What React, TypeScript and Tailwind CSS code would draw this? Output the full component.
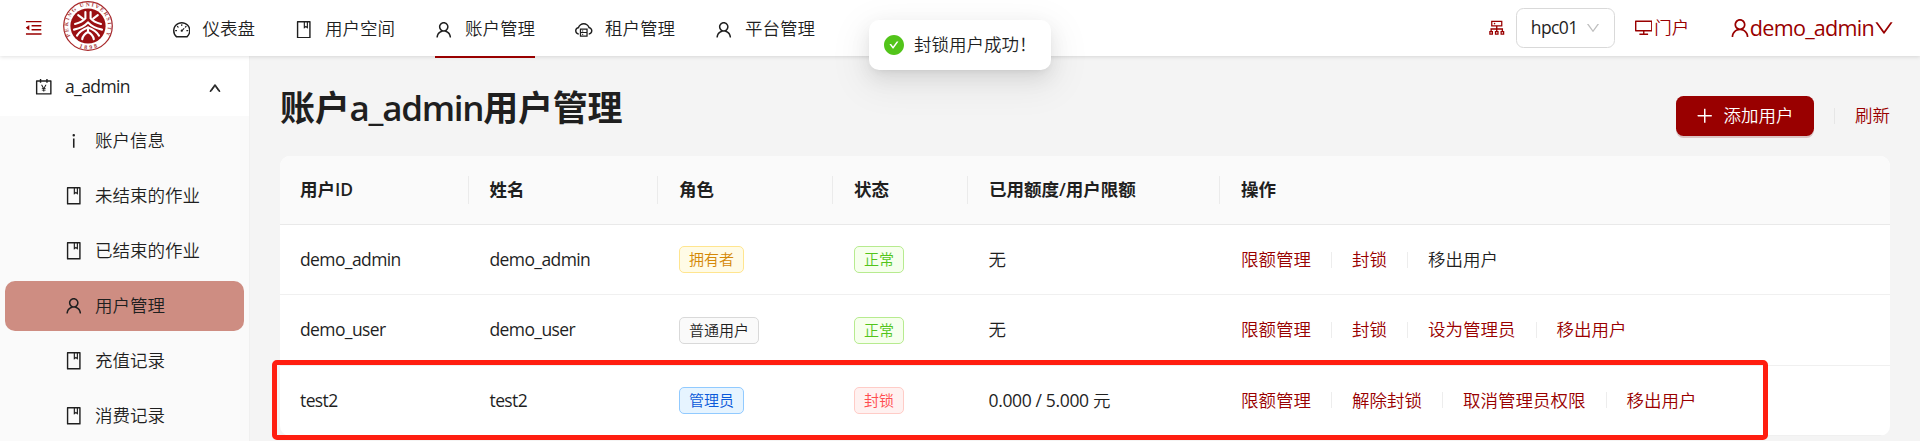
import type { ReactNode } from "react";
import type { IconType } from "react-icons";
import {
  AiFillCheckCircle,
  AiOutlineAccountBook,
  AiOutlineBook,
  AiOutlineCloudServer,
  AiOutlineCluster,
  AiOutlineDashboard,
  AiOutlineDesktop,
  AiOutlineDown,
  AiOutlineInfo,
  AiOutlineMenuFold,
  AiOutlinePlus,
  AiOutlineUp,
  AiOutlineUser,
} from "react-icons/ai";

function Icon({ as: As, className = "size-[17.5px]" }: { as: IconType; className?: string }) {
  return <As viewBox="64 64 896 896" className={"shrink-0 " + className} />;
}

function Logo() {
  return (
    <svg viewBox="0 0 50 50" className="size-[50px] shrink-0">
      <defs>
        <path id="ringTop" d="M7.6 35A20 20 0 1 1 42.4 35" />
        <path id="ringBottom" d="M12 44.2A23.2 23.2 0 0 0 38 44.2" />
      </defs>
      <circle cx="25" cy="25" r="24.3" fill="#fff" stroke="#a8292b" strokeWidth="1.2" />
      <circle cx="25" cy="25" r="17.6" fill="#9b1013" />
      <text fontSize="5.6" fontWeight="700" fill="#a83a3b" fontFamily="Liberation Serif, serif">
        <textPath href="#ringTop" textLength="82">PEKING UNIVERSITY</textPath>
      </text>
      <text fontSize="6" fontWeight="700" fill="#a83a3b" fontFamily="Liberation Serif, serif">
        <textPath href="#ringBottom" startOffset="4.5" textLength="19">1898</textPath>
      </text>
      <g fill="none" stroke="#fff" strokeWidth="2.1" strokeLinecap="round" strokeLinejoin="round">
        <path d="M22.4 11V17.4Q19.5 21 12 23" />
        <path d="M27.6 11V17.4Q30.5 21 38 23" />
        <path d="M15.2 14.2L19.8 17.6M34.8 14.2L30.2 17.6" />
        <path d="M11 28.6Q20.5 26.6 25 21.4Q29.5 26.6 39 28.6" />
        <path d="M14 34.6Q17 29.6 25 26.6Q33 29.6 36 34.6" />
        <path d="M19.2 38.2Q20 33.6 25 31Q30 33.6 30.8 38.2" />
        <path d="M25 26.6V31" />
      </g>
    </svg>
  );
}

const topNav: { icon: IconType; label: string; active?: boolean }[] = [
  { icon: AiOutlineDashboard, label: "仪表盘" },
  { icon: AiOutlineBook, label: "用户空间" },
  { icon: AiOutlineUser, label: "账户管理", active: true },
  { icon: AiOutlineCloudServer, label: "租户管理" },
  { icon: AiOutlineUser, label: "平台管理" },
];

function Header() {
  return (
    <header className="relative z-10 flex h-14 shrink-0 bg-white pr-[26px] shadow-[0_1px_4px_rgba(0,0,0,0.12)]">
      <div className="flex items-center pl-[25px] text-[#990000]">
        <Icon as={AiOutlineMenuFold} />
      </div>
      <div className="ml-[20.5px] pt-px">
        <Logo />
      </div>
      <nav className="ml-[59.5px] flex gap-10">
        {topNav.map((item) => (
          <a
            key={item.label}
            className={
              item.active
                ? "flex h-[58px] items-center gap-[12.5px] border-b-2 border-[#990000]"
                : "flex h-[58px] items-center gap-[12.5px] border-b-2 border-transparent"
            }
          >
            <Icon as={item.icon} className="mt-[3px] size-[17.5px]" />
            <span className="mt-px">{item.label}</span>
          </a>
        ))}
      </nav>
      <div className="ml-auto flex items-center text-[#990000]">
        <Icon as={AiOutlineCluster} />
        <div className="ml-[10px] flex h-10 w-[99px] items-center justify-between rounded-[7.5px] border border-[#d9d9d9] bg-white pr-[14px] pl-[14px] text-[#1f1f1f]">
          <span className="font-normal tracking-[-0.6px]">hpc01</span>
          <Icon as={AiOutlineDown} className="size-[14px] text-[#bfbfbf]" />
        </div>
        <div className="ml-5 flex items-center">
          <Icon as={AiOutlineDesktop} />
          <span className="ml-[2px]">门户</span>
        </div>
        <div className="ml-[40.5px] flex items-center text-[21.6px]">
          <Icon as={AiOutlineUser} className="size-[20px]" />
          <span className="font-normal tracking-[-0.75px]">demo_admin</span>
          <Icon as={AiOutlineDown} className="size-[20px]" />
        </div>
      </div>
    </header>
  );
}

const sideNav: { icon: IconType; label: string; active?: boolean }[] = [
  { icon: AiOutlineInfo, label: "账户信息" },
  { icon: AiOutlineBook, label: "未结束的作业" },
  { icon: AiOutlineBook, label: "已结束的作业" },
  { icon: AiOutlineUser, label: "用户管理", active: true },
  { icon: AiOutlineBook, label: "充值记录" },
  { icon: AiOutlineBook, label: "消费记录" },
];

function Sidebar() {
  return (
    <aside className="w-[250px] shrink-0 border-r border-[#f0f0f0] bg-white">
      <div className="mt-[5px] flex h-[55px] items-center pr-7 pb-[3px] pl-[35px]">
        <Icon as={AiOutlineAccountBook} />
        <span className="ml-[12.5px] font-normal tracking-[-0.6px]">a_admin</span>
        <Icon as={AiOutlineUp} className="mt-px ml-auto size-[12px] stroke-[60]" />
      </div>
      <ul className="flex flex-col gap-[5px] bg-[#fafafa] px-[5px] pb-10">
        {sideNav.map((item) => (
          <li
            key={item.label}
            className={
              item.active
                ? "flex h-[50px] shrink-0 items-center gap-[12.5px] rounded-[10px] bg-[#ce8d82] pl-[60px]"
                : "flex h-[50px] shrink-0 items-center gap-[12.5px] rounded-[10px] pl-[60px]"
            }
          >
            <Icon as={item.icon} />
            <span>{item.label}</span>
          </li>
        ))}
      </ul>
    </aside>
  );
}

const tagTones = {
  gold: "border-[#ffe58f] bg-[#fffbe6] text-[#d48806]",
  plain: "border-[#d9d9d9] bg-[#fafafa] text-[#1f1f1f]",
  blue: "border-[#91caff] bg-[#e6f4ff] text-[#0958d9]",
  green: "border-[#b7eb8f] bg-[#f6ffed] text-[#52c41a]",
  red: "border-[#ffccc7] bg-[#fff1f0] text-[#ff4d4f]",
};
type Tone = keyof typeof tagTones;

function Tag({ tone, children }: { tone: Tone; children: ReactNode }) {
  return (
    <span
      className={
        "inline-flex h-[27px] items-center rounded-[5px] border px-[9px] text-[15px] leading-none whitespace-nowrap " +
        tagTones[tone]
      }
    >
      {children}
    </span>
  );
}

interface Row {
  id: string;
  role: [Tone, string];
  status: [Tone, string];
  used?: string;
  unit: string;
  actions: { label: string; disabled?: boolean }[];
}

const rows: Row[] = [
  {
    id: "demo_admin",
    role: ["gold", "拥有者"],
    status: ["green", "正常"],
    unit: "无",
    actions: [{ label: "限额管理" }, { label: "封锁" }, { label: "移出用户", disabled: true }],
  },
  {
    id: "demo_user",
    role: ["plain", "普通用户"],
    status: ["green", "正常"],
    unit: "无",
    actions: [{ label: "限额管理" }, { label: "封锁" }, { label: "设为管理员" }, { label: "移出用户" }],
  },
  {
    id: "test2",
    role: ["blue", "管理员"],
    status: ["red", "封锁"],
    used: "0.000 / 5.000 ",
    unit: "元",
    actions: [{ label: "限额管理" }, { label: "解除封锁" }, { label: "取消管理员权限" }, { label: "移出用户" }],
  },
];

const columns = ["用户ID", "姓名", "角色", "状态", "已用额度/用户限额", "操作"];
const gridCols = "grid grid-cols-[189.5px_189.5px_175px_135px_252px_1fr] items-center";

function UserTable() {
  return (
    <div className="relative">
      <div className="overflow-hidden rounded-[10px] bg-white">
        <div className={gridCols + " h-[69px] border-b border-[#e9e9e9] bg-[#fafafa] font-semibold"}>
          {columns.map((label, i) => (
            <div
              key={label}
              className={
                i < columns.length - 1
                  ? "mr-px -ml-px flex h-7 items-center border-r border-[#ebebeb] pl-[21px] whitespace-nowrap"
                  : "flex h-7 items-center pl-5 whitespace-nowrap"
              }
            >
              {label}
            </div>
          ))}
        </div>
        {rows.map((row) => (
          <div key={row.id} className={gridCols + " h-[70.4px] border-b border-[#f0f0f0]"}>
            <div className="pl-5 font-normal tracking-[-0.6px]">{row.id}</div>
            <div className="pl-5 font-normal tracking-[-0.6px]">{row.id}</div>
            <div className="flex pl-5">
              <Tag tone={row.role[0]}>{row.role[1]}</Tag>
            </div>
            <div className="flex pl-5">
              <Tag tone={row.status[0]}>{row.status[1]}</Tag>
            </div>
            <div className="pl-[19.5px] whitespace-pre">
              {row.used && <span className="font-normal tracking-[-0.35px]">{row.used}</span>}
              {row.unit}
            </div>
            <div className="flex items-center gap-5 pl-5 whitespace-nowrap">
              {row.actions.map((action, i) => (
                <div key={action.label} className="flex items-center gap-5">
                  {i > 0 && <span className="h-4 w-px bg-[#ededed]" />}
                  <a className={action.disabled ? "text-[#1f1f1f]" : "text-[#990000]"}>{action.label}</a>
                </div>
              ))}
            </div>
          </div>
        ))}
      </div>
      <div className="absolute top-[204px] -left-2 h-20 w-[1496px] rounded-[5px] border-[5px] border-[#ff1e10]" />
    </div>
  );
}

function Toast() {
  return (
    <div className="absolute top-5 left-[869px] z-20 flex h-[50px] w-[182px] items-center rounded-[10px] bg-white pl-[15px] shadow-[0_8px_20px_0_rgba(0,0,0,0.08),0_4px_8px_-5px_rgba(0,0,0,0.12),0_11px_35px_10px_rgba(0,0,0,0.05)]">
      <Icon as={AiFillCheckCircle} className="size-5 text-[#52c41a]" />
      <span className="ml-[10px] whitespace-nowrap">封锁用户成功！</span>
    </div>
  );
}

export default function App() {
  return (
    <div className="relative flex h-[441px] w-[1920px] flex-col overflow-hidden bg-[#f4f4f4] font-['Open_Sans','Noto_Sans_CJK_SC',sans-serif] text-[17.5px] leading-[27.5px] font-[360] text-[#1f1f1f]">
      <Header />
      <div className="flex min-h-0 flex-1">
        <Sidebar />
        <main className="flex-1 pr-[30px] pl-[30px]">
          <div className="flex h-[100px] items-start justify-between">
            <h1 className="mt-[30px] text-[35px] leading-[44px] font-semibold tracking-[-0.2px]">
              账户<span className="tracking-[-1.3px]">a_admin</span>用户管理
            </h1>
            <div className="mt-10 flex items-center">
              <button className="flex h-10 w-[138px] items-center rounded-[7.5px] bg-[#990000] pl-5 text-white shadow-[0_2px_0_#dbc4c4]">
                <Icon as={AiOutlinePlus} />
                <span className="ml-[10px]">添加用户</span>
              </button>
              <span className="ml-5 h-4 w-px bg-[#e6e6e6]" />
              <a className="ml-5 text-[#990000]">刷新</a>
            </div>
          </div>
          <UserTable />
        </main>
      </div>
      <Toast />
    </div>
  );
}
